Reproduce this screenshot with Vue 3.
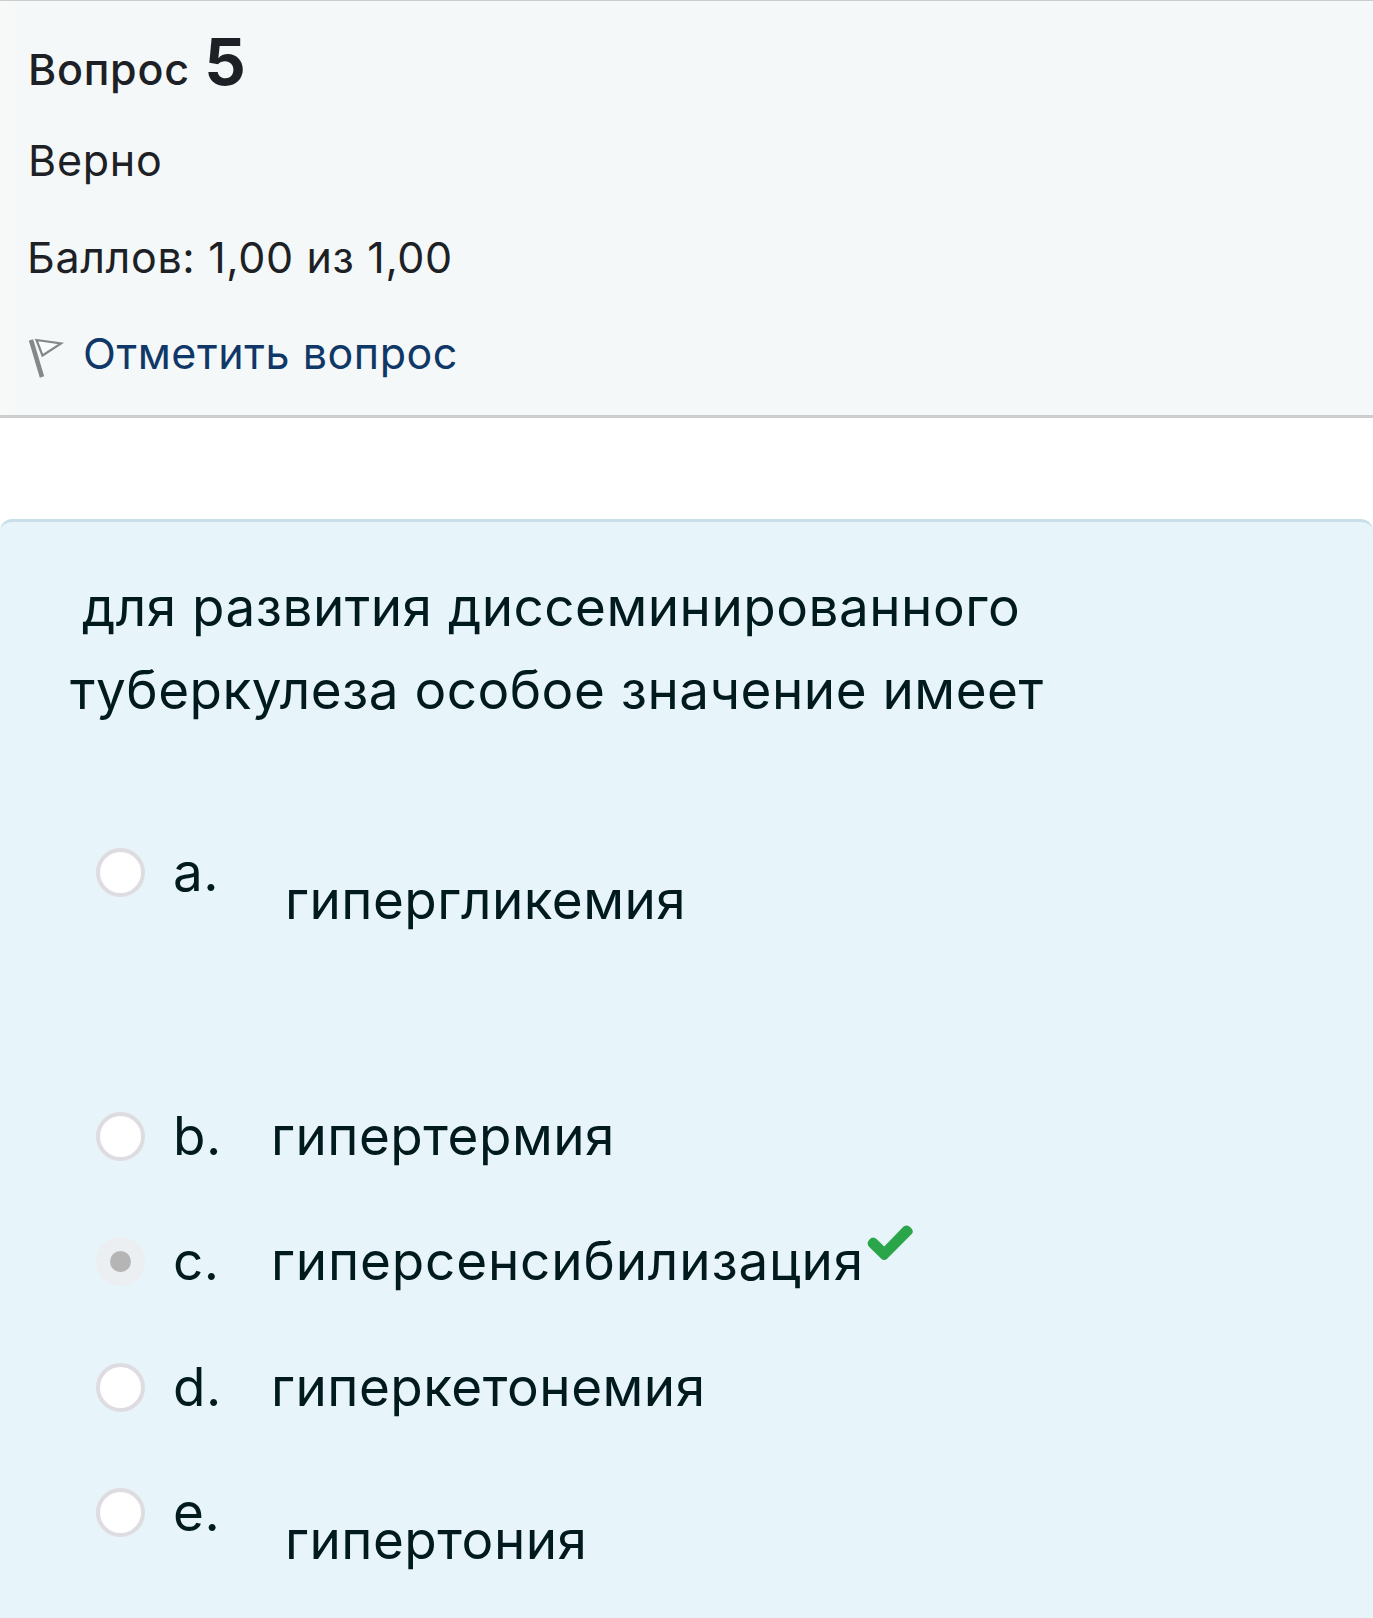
<script setup>
const answers = [
  { letter: 'a', text: 'гипергликемия', block: true, tall: true },
  { letter: 'b', text: 'гипертермия' },
  { letter: 'c', text: 'гиперсенсибилизация', checked: true, correct: true },
  { letter: 'd', text: 'гиперкетонемия' },
  { letter: 'e', text: 'гипертония', block: true },
];
</script>
<template>
  <div class="question-page">
    <!-- question info -->
    <div class="info">
      <h3 class="info-number">
        <span>Вопрос</span>
        <span class="qno">5</span>
      </h3>
      <div class="info-state">Верно</div>
      <div class="info-grade">Баллов: 1,00 из 1,00</div>
      <a class="info-flag">
        <svg class="flag-icon" width="36" height="42" viewBox="0 0 36 42">
          <path d="M2 3 L13 40" fill="none" stroke="#858888" stroke-width="4.5" />
          <path d="M7.5 3 L32 6.5 L13.5 18.5 Z" fill="#fbfcfc" stroke="#858888" stroke-width="2.2" />
        </svg>
        <span class="flag-text">Отметить вопрос</span>
      </a>
    </div>
    <!-- question body -->
    <div class="formulation">
      <p class="qtext"><span class="indent">для развития диссеминированного</span><br><span>туберкулеза особое значение имеет</span></p>
      <div
        v-for="answer in answers"
        :key="answer.letter"
        class="answer"
        :class="{ tall: answer.tall }"
      >
        <span
          class="radio"
          :class="{ checked: answer.checked }"
        />
        <span class="letter">{{ answer.letter }}.</span>
        <span
          class="answer-text"
          :class="{ block: answer.block, correct: answer.correct }"
        >{{ answer.text }}</span>
        <svg
          v-if="answer.correct"
          class="check-icon"
          width="50"
          height="40"
          viewBox="0 0 50 40"
        >
          <path
            d="M3.2 16.8 Q6.8 12.5 10.8 16.2 L18.2 23.4 L37.6 3.6 Q41.2 1 44.6 4.4 Q48.8 8.2 45.2 11.6 L21.4 35.6 Q18.2 38.6 15 35.6 L2.8 23.4 Q0.2 20.2 3.2 16.8 Z"
            fill="#2ba54a"
          />
        </svg>
      </div>
    </div>
  </div>
</template>
<style>
body {
  margin: 0;
  background: #fff;
}
</style>
<style scoped>
.question-page {
  height: 1618px;
  overflow: hidden;
  font-family: Inter, "Liberation Sans", sans-serif;
  color: #1d2125;
}

/* question info */
.info {
  box-sizing: border-box;
  height: 418px;
  padding: 31px 0 0 28px;
  border-top: 1px solid #c9cdcd;
  border-bottom: 3px solid #cbcdce;
  background: linear-gradient(90deg, #f8f8f9 8px, #f4f8f8 20px);
  font-size: 43px;
  line-height: 60px;
  letter-spacing: 0.75px;
}

.info-number {
  display: flex;
  align-items: baseline;
  gap: 14.5px;
  height: 60px;
  margin: 0;
  font-size: 43px;
  font-weight: 500;
}

.qno {
  font-size: 65px;
  font-weight: 700;
}

.info-state {
  margin-top: 38px;
}

.info-grade {
  margin: 37px 0 0 -1px;
  letter-spacing: 0.65px;
}

.info-flag {
  display: flex;
  margin-top: 36px;
  color: #0f3767;
  letter-spacing: 0.55px;
}

.flag-icon {
  margin: 14px 18px 0 1px;
}

/* question body */
.formulation {
  box-sizing: border-box;
  height: 1130px;
  margin-top: 101px;
  padding: 44px 0 0 70px;
  border-top: 3px solid #c8dfea;
  border-radius: 12px;
  background: #e7f4fa;
  color: #001a1e;
  font-size: 53px;
  letter-spacing: 0.5px;
}

.qtext {
  margin: 0 0 110px;
  line-height: 83px;
  white-space: nowrap;
}

.indent {
  margin-left: 12px;
}

.answer {
  display: flex;
  height: 125.4px;
  padding-left: 26px;
  line-height: 60px;
}

.answer.tall {
  height: 264px;
}

.radio {
  box-sizing: border-box;
  flex: none;
  width: 49px;
  height: 49px;
  margin-top: 6px;
  border: 4px solid #dedce0;
  border-radius: 50%;
  background: #fff;
}

.radio.checked {
  border: 14px solid #ebeff2;
  background: #b5b5b6;
}

.letter {
  flex: none;
  width: 98px;
  margin-left: 28px;
}

.answer-text.block {
  margin: 28px 0 0 14px;
}

.answer-text.correct {
  letter-spacing: 0.85px;
}

.check-icon {
  margin: -8px 0 0 2px;
}
</style>
